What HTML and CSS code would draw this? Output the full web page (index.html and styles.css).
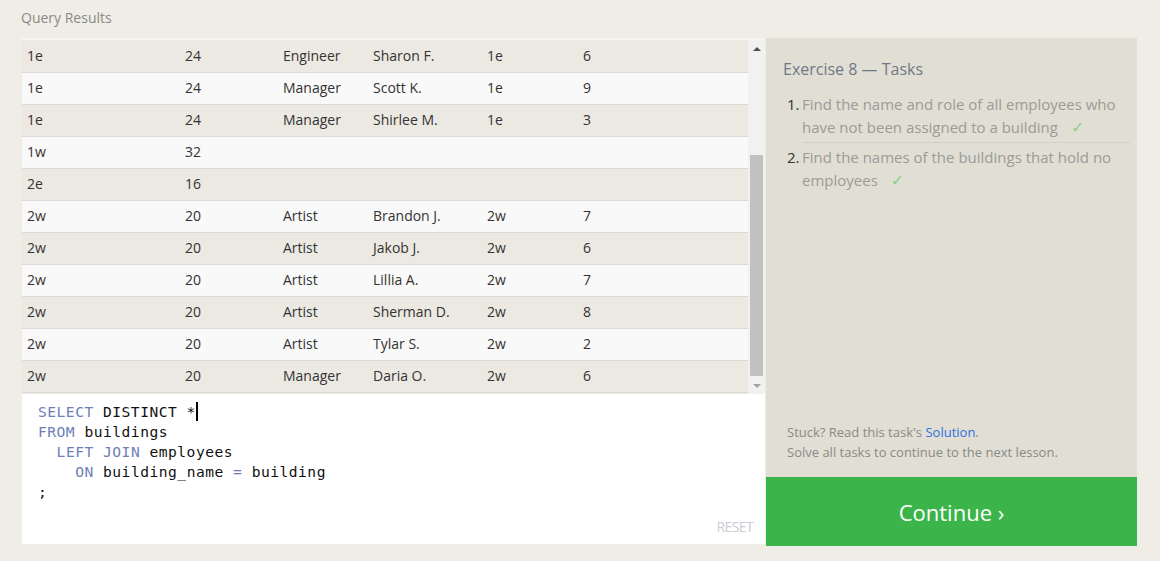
FILE: index.html
```html
<!DOCTYPE html>
<html lang="en">
<head>
<meta charset="utf-8">
<title>Query Results</title>
<link rel="stylesheet" href="styles.css">
</head>
<body>
<div class="page">
  <div class="section-title">Query Results</div>
  <div class="workspace">
    <div class="left">
      <div class="results">
        <div class="table-wrap">
          <table class="grid">
            <tr><td>1e</td><td>24</td><td>Engineer</td><td>Sharon F.</td><td>1e</td><td>6</td></tr>
            <tr><td>1e</td><td>24</td><td>Manager</td><td>Scott K.</td><td>1e</td><td>9</td></tr>
            <tr><td>1e</td><td>24</td><td>Manager</td><td>Shirlee M.</td><td>1e</td><td>3</td></tr>
            <tr><td>1w</td><td>32</td><td></td><td></td><td></td><td></td></tr>
            <tr><td>2e</td><td>16</td><td></td><td></td><td></td><td></td></tr>
            <tr><td>2w</td><td>20</td><td>Artist</td><td>Brandon J.</td><td>2w</td><td>7</td></tr>
            <tr><td>2w</td><td>20</td><td>Artist</td><td>Jakob J.</td><td>2w</td><td>6</td></tr>
            <tr><td>2w</td><td>20</td><td>Artist</td><td>Lillia A.</td><td>2w</td><td>7</td></tr>
            <tr><td>2w</td><td>20</td><td>Artist</td><td>Sherman D.</td><td>2w</td><td>8</td></tr>
            <tr><td>2w</td><td>20</td><td>Artist</td><td>Tylar S.</td><td>2w</td><td>2</td></tr>
            <tr><td>2w</td><td>20</td><td>Manager</td><td>Daria O.</td><td>2w</td><td>6</td></tr>
          </table>
        </div>
        <div class="scrollbar">
          <div class="sb-btn"><span class="tri-up"></span></div>
          <div class="sb-track"><div class="sb-thumb"></div></div>
          <div class="sb-btn"><span class="tri-down"></span></div>
        </div>
      </div>
      <div class="editor">
        <div class="code">
          <div class="line"><span class="kw">SELECT</span> DISTINCT *<span class="caret"></span></div>
          <div class="line"><span class="kw">FROM</span> buildings</div>
          <div class="line indent1"><span class="kw">LEFT JOIN</span> employees</div>
          <div class="line indent2"><span class="kw">ON</span> building_name <span class="kw">=</span> building</div>
          <div class="line">;</div>
        </div>
        <div class="reset">RESET</div>
      </div>
    </div>
    <div class="right">
      <div class="panel">
        <div class="panel-title">Exercise 8 — Tasks</div>
        <ol class="tasks">
          <li class="task"><span class="num">1.</span><span class="task-text first">Find the name and role of all employees who have not been assigned to a building<span class="check">✓</span></span></li>
          <li class="task"><span class="num">2.</span><span class="task-text">Find the names of the buildings that hold no employees<span class="check">✓</span></span></li>
        </ol>
        <div class="help">
          <div>Stuck? Read this task's <span class="link">Solution</span>.</div>
          <div>Solve all tasks to continue to the next lesson.</div>
        </div>
      </div>
      <div class="continue">Continue ›</div>
    </div>
  </div>
</div>
</body>
</html>
```

FILE: styles.css
```css
* { box-sizing: border-box; }

html, body {
  margin: 0;
  padding: 0;
  background: #efede6;
  font-family: "Open Sans", "Noto Sans", sans-serif;
}

.page {
  padding: 0 23px 0 22px;
  height: 561px;
}

.section-title {
  height: 38px;
  padding-top: 8px;
  margin-left: -1px;
  font-size: 14px;
  line-height: 20px;
  color: #8a8a88;
}

.workspace {
  display: flex;
  gap: 1px;
  height: 508px;
}

.left {
  width: 743px;
  display: flex;
  flex-direction: column;
}

.results {
  height: 356px;
  display: flex;
  border-top: 2px solid #f6f5f2;
  background: #ebe9e2;
}

.table-wrap {
  flex: 1;
  overflow: hidden;
}

.grid {
  border-collapse: collapse;
  width: 100%;
  table-layout: fixed;
  font-size: 14px;
  color: #333;
}

.grid tr {
  height: 32px;
  border-bottom: 1px solid #dcdad3;
}

.grid tr:nth-child(odd) { background: #ebe9e2; }
.grid tr:nth-child(even) { background: #f9f9f9; }

.grid td {
  padding: 0 0 0 5px;
  line-height: 20px;
  white-space: nowrap;
}

.grid td:nth-child(1) { width: 158px; }
.grid td:nth-child(2) { width: 98px; }
.grid td:nth-child(3) { width: 90px; }
.grid td:nth-child(4) { width: 114px; }
.grid td:nth-child(5) { width: 96px; }

.scrollbar {
  width: 17px;
  background: #f1f1f1;
  display: flex;
  flex-direction: column;
}

.sb-btn {
  height: 17px;
  display: flex;
  align-items: center;
  justify-content: center;
}

.tri-up {
  width: 0;
  height: 0;
  border-left: 4px solid transparent;
  border-right: 4px solid transparent;
  border-bottom: 4px solid #505050;
}

.tri-down {
  width: 0;
  height: 0;
  border-left: 4px solid transparent;
  border-right: 4px solid transparent;
  border-top: 4px solid #a3a3a3;
}

.sb-track {
  flex: 1;
  display: flex;
  flex-direction: column;
  justify-content: flex-end;
  padding: 0 2px 1px 2px;
}

.sb-thumb {
  height: 221px;
  background: #c1c1c1;
}

.editor {
  height: 150px;
  background: #fff;
  display: flex;
  flex-direction: column;
  padding: 8px 12px 8px 16px;
}

.code {
  font-family: "DejaVu Sans Mono", "Liberation Mono", monospace;
  font-size: 14.6px;
  letter-spacing: 0.5px;
  line-height: 20px;
  color: #111;
}

.line {
  white-space: pre;
  height: 20px;
}

.indent1 { padding-left: 18.6px; }
.indent2 { padding-left: 37.2px; }

.kw { color: #6d80b6; }

.caret {
  display: inline-block;
  width: 0;
  height: 19px;
  border-left: 2px solid #000;
  vertical-align: -4px;
}

.reset {
  margin-top: auto;
  align-self: flex-end;
  font-size: 14px;
  line-height: 18px;
  color: #c9cdd2;
  letter-spacing: -0.6px;
}

.right {
  width: 371px;
  display: flex;
  flex-direction: column;
}

.panel {
  flex: 1;
  background: #e1dfd4;
  display: flex;
  flex-direction: column;
  padding: 20px 7px 15px 17px;
}

.panel-title {
  font-size: 16px;
  line-height: 22px;
  color: #6f7888;
  margin-bottom: 13px;
}

.tasks {
  list-style: none;
  margin: 0;
  padding: 0 0 0 4px;
}

.task {
  display: flex;
  font-size: 15px;
  line-height: 23px;
}

.num {
  width: 15px;
  flex: none;
  color: #333;
}

.task-text {
  flex: 1;
  color: #9b9b98;
}

.task-text.first {
  padding-bottom: 3px;
  border-bottom: 1px solid #d2d0c5;
  margin-bottom: 3px;
}

.check {
  display: inline-block;
  color: #8ccf8c;
  margin-left: 13px;
  font-family: "DejaVu Sans", sans-serif;
  font-size: 16px;
  line-height: 16px;
}

.help {
  margin-top: auto;
  padding-left: 4px;
  font-size: 13px;
  line-height: 20px;
  color: #8a8a87;
}

.link { color: #2f6fe0; }

.continue {
  height: 69px;
  background: #3bb44a;
  color: #fff;
  font-size: 22px;
  display: flex;
  align-items: center;
  justify-content: center;
}
```
